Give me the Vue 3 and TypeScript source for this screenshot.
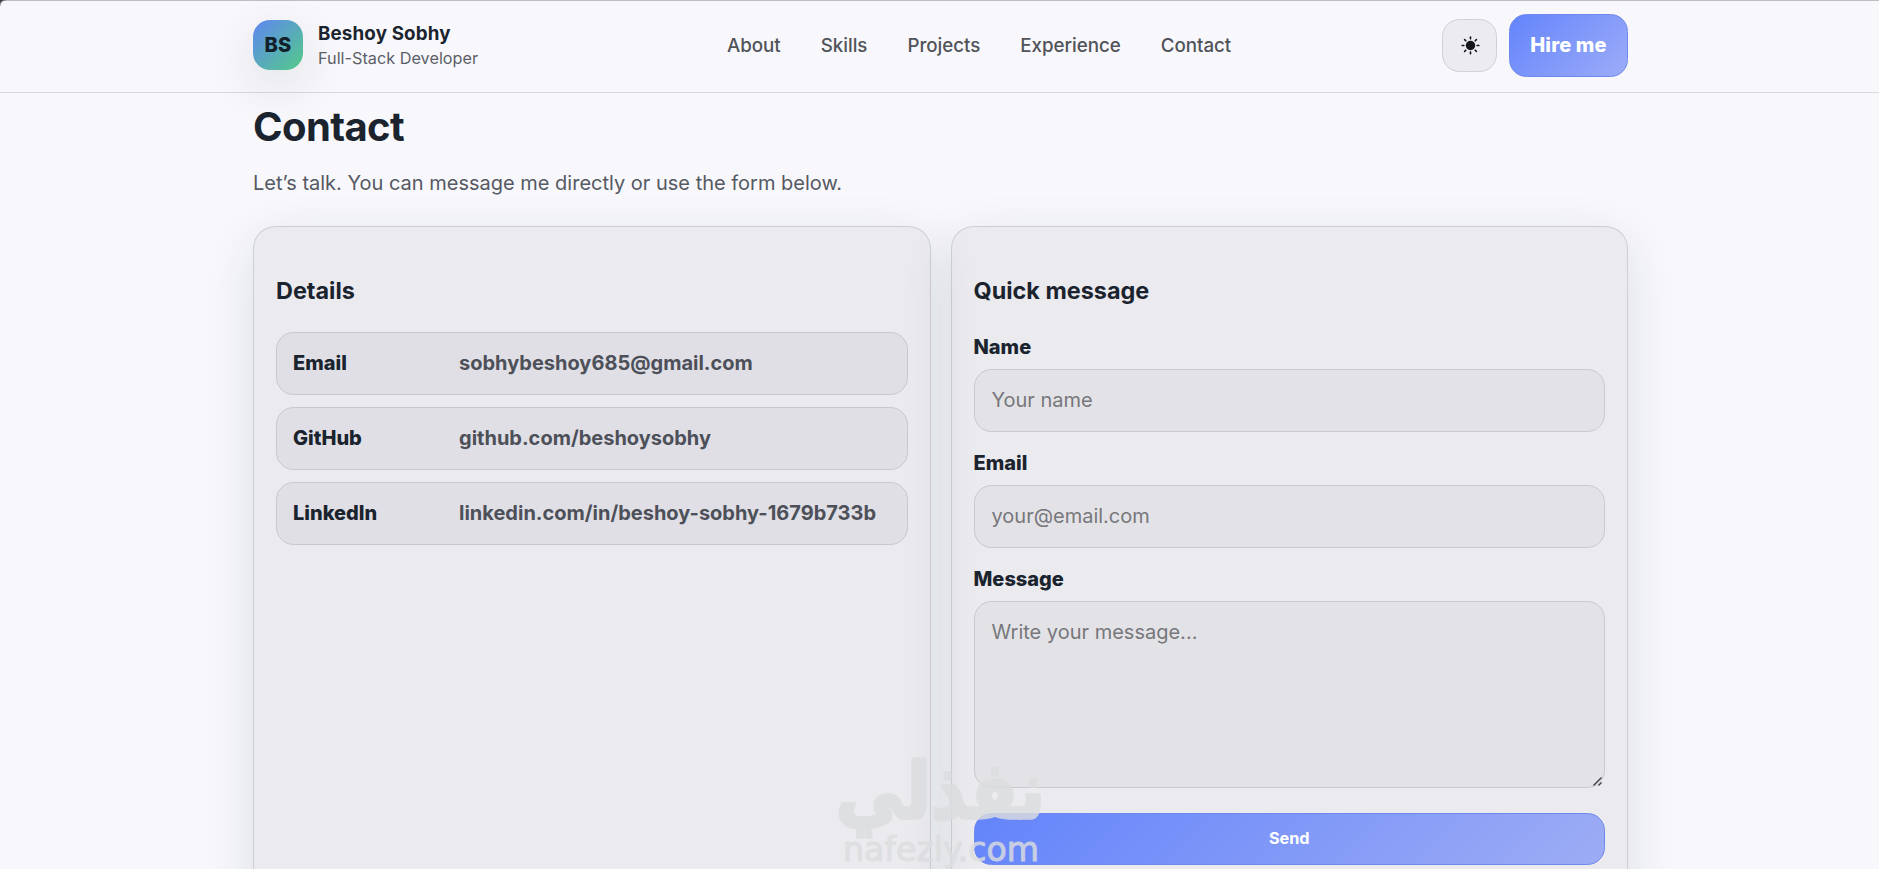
<script setup lang="ts">
import { ref } from 'vue'

interface Detail {
  label: string
  value: string
  href: string
}

const links: string[] = ['About', 'Skills', 'Projects', 'Experience', 'Contact']

const details: Detail[] = [
  { label: 'Email', value: 'sobhybeshoy685@gmail.com', href: 'mailto:sobhybeshoy685@gmail.com' },
  { label: 'GitHub', value: 'github.com/beshoysobhy', href: '#github' },
  { label: 'LinkedIn', value: 'linkedin.com/in/beshoy-sobhy-1679b733b', href: '#linkedin' },
]

const rays: number[] = [0, 45, 90, 135, 180, 225, 270, 315]

const name = ref('')
const email = ref('')
const message = ref('')
</script>

<template>
  <div class="page">
    <header class="header">
      <div class="container bar">
        <div class="brand">
          <div class="logo">BS</div>
          <div class="brand-text">
            <div class="brand-name">Beshoy Sobhy</div>
            <div class="brand-role">Full-Stack Developer</div>
          </div>
        </div>
        <nav class="nav">
          <a v-for="link in links" :key="link" :href="'#' + link.toLowerCase()">{{ link }}</a>
        </nav>
        <div class="actions">
          <button class="theme" type="button" aria-label="Toggle theme">
            <svg width="19" height="19" viewBox="0 0 18 18">
              <circle cx="9" cy="9" r="4.5" fill="#15161c" />
              <line
                v-for="angle in rays"
                :key="angle"
                x1="9"
                y1="1.1"
                x2="9"
                y2="2.7"
                stroke="#15161c"
                stroke-width="1.5"
                stroke-linecap="round"
                :transform="`rotate(${angle} 9 9)`"
              />
            </svg>
          </button>
          <a class="hire" href="#contact">Hire me</a>
        </div>
      </div>
    </header>

    <main class="container">
      <h1>Contact</h1>
      <p class="lead">Let’s talk. You can message me directly or use the form below.</p>
      <div class="cards">
        <section class="card">
          <h3>Details</h3>
          <div class="rows">
            <a v-for="d in details" :key="d.label" class="row" :href="d.href">
              <span class="row-label">{{ d.label }}</span>
              <span class="row-value">{{ d.value }}</span>
            </a>
          </div>
        </section>
        <section class="card">
          <h3>Quick message</h3>
          <form @submit.prevent>
            <label for="name">Name</label>
            <input id="name" v-model="name" placeholder="Your name" />
            <label for="email">Email</label>
            <input id="email" v-model="email" placeholder="your@email.com" />
            <label for="message">Message</label>
            <div class="area">
              <textarea id="message" v-model="message" placeholder="Write your message..."></textarea>
              <svg class="grip" width="12" height="12" viewBox="0 0 12 12">
                <path d="M1.5 9.5 9.5 1.5M6.5 9.5 9.5 6.5" stroke="#3c3d42" stroke-width="1.4" fill="none" />
              </svg>
            </div>
            <button class="send" type="submit">Send</button>
          </form>
        </section>
      </div>
    </main>

    <svg class="watermark" width="230" height="167" viewBox="0 0 230 167">
      <g transform="translate(0 116) scale(1 1.18)">
        <text class="wm-ar" x="5" y="0" textLength="209" lengthAdjust="spacingAndGlyphs" direction="ltr">نفذلي</text>
      </g>
      <text class="wm-en" x="12" y="159" textLength="196" lengthAdjust="spacingAndGlyphs">nafezly.com</text>
    </svg>
    <div class="corner"></div>
  </div>
</template>

<style>
body {
  background: #f8f8fc;
}
</style>

<style scoped>
.page {
  position: relative;
  box-sizing: border-box;
  height: 869px;
  overflow: hidden;
  font-family: Inter, "Liberation Sans", sans-serif;
  font-size: 20px;
  color: #1b242e;
  background: #f8f8fc;
}
.page * {
  box-sizing: border-box;
}
.container {
  width: 1375px;
  margin-left: 253px;
}
a {
  text-decoration: none;
  color: inherit;
}
.header {
  height: 93px;
  border-top: 1px solid #bdbdc2;
  border-bottom: 1px solid #d9dae0;
}
.bar {
  height: 91px;
  display: flex;
  justify-content: space-between;
  align-items: center;
}
.brand {
  display: flex;
  align-items: center;
  gap: 15px;
  height: 50px;
  margin-top: -3px;
  margin-right: 38px;
}
.logo {
  width: 50px;
  height: 50px;
  border-radius: 17px;
  display: flex;
  align-items: center;
  justify-content: center;
  font-weight: 800;
  font-size: 20px;
  letter-spacing: 0.2px;
  color: #12202b;
  background: linear-gradient(135deg, #6086f2, #52cb88);
  box-shadow: 0 16px 50px rgba(20, 24, 36, 0.12);
}
.brand-text {
  padding-top: 2px;
}
.brand-name {
  font-size: 18.75px;
  line-height: 25px;
  font-weight: 700;
  letter-spacing: 0.15px;
}
.brand-role {
  font-size: 16.25px;
  line-height: 25px;
  color: #5c5f68;
}
.nav {
  display: flex;
  gap: 40px;
  margin-top: -2px;
  font-size: 18.75px;
  font-weight: 500;
  letter-spacing: -0.03px;
  color: #505359;
}
.actions {
  display: flex;
  align-items: center;
  gap: 12px;
  margin-top: -2px;
}
.theme {
  width: 55px;
  height: 53px;
  padding: 0 0 0 1px;
  border: 1px solid #d0d0d5;
  border-radius: 17.5px;
  background: #ececf0;
  display: flex;
  align-items: center;
  justify-content: center;
}
.hire {
  width: 119px;
  height: 63px;
  padding-bottom: 2px;
  border: 1px solid #6e88ed;
  border-radius: 17.5px;
  display: flex;
  align-items: center;
  justify-content: center;
  font-weight: 800;
  letter-spacing: 0.15px;
  color: #fff;
  background: linear-gradient(135deg, #6384fb, #9dacf8);
}
h1 {
  margin: 9px 0 0;
  font-size: 40px;
  line-height: 50px;
  font-weight: 700;
  letter-spacing: -0.6px;
}
.lead {
  margin: 16px 0 28px;
  font-size: 20px;
  line-height: 30px;
  color: #555962;
}
.cards {
  display: grid;
  grid-template-columns: 1fr 1fr;
  gap: 20px;
}
.card {
  height: 700px;
  padding: 48px 22px 0;
  border: 1px solid rgba(20, 22, 34, 0.13);
  border-radius: 22.5px;
  background: rgba(20, 20, 26, 0.06);
  box-shadow: 0 14px 50px rgba(20, 40, 44, 0.12);
}
h3 {
  margin: 0 0 42px;
  font-size: 23.4px;
  line-height: 32px;
  font-weight: 700;
}
.card:first-child h3 {
  margin-bottom: 25px;
}
.rows {
  display: grid;
  gap: 12.5px;
}
.row {
  height: 62.5px;
  padding: 0 16px;
  border: 1px solid #c8c8cf;
  border-radius: 17.5px;
  background: #dfdfe5;
  display: grid;
  grid-template-columns: 166px 1fr;
  align-items: center;
}
.row-label {
  font-weight: 800;
}
.row-value {
  font-weight: 700;
  color: #4d5059;
  white-space: nowrap;
}
form {
  display: grid;
  margin-top: -17px;
}
label {
  height: 37px;
  line-height: 24px;
  padding-top: 3px;
  font-weight: 800;
}
input,
textarea {
  display: block;
  width: 100%;
  height: 62.5px;
  margin: 0 0 16.5px;
  padding: 0 17px;
  border: 1px solid #c9c9ce;
  border-radius: 17.5px;
  background: #e3e3e7;
  font: inherit;
  outline: none;
}
input::placeholder,
textarea::placeholder {
  color: #77777b;
  opacity: 1;
}
.area {
  position: relative;
  margin-bottom: 25px;
}
textarea {
  height: 187px;
  margin: 0;
  padding: 15px 17px;
  line-height: 30px;
  resize: none;
}
.grip {
  position: absolute;
  right: 1px;
  bottom: 0;
}
.send {
  height: 52px;
  padding: 0 0 2px;
  border: 1px solid #6e88ed;
  border-radius: 17.5px;
  background: linear-gradient(135deg, #6384fb, #9dacf4);
  font-family: inherit;
  font-size: 16.25px;
  font-weight: 700;
  color: #fff;
}
.watermark {
  position: absolute;
  left: 831px;
  top: 702px;
  fill: #dcdddf;
  stroke: #dcdddf;
  stroke-linejoin: round;
  opacity: 0.82;
}
.wm-ar {
  font-family: "DejaVu Sans", sans-serif;
  font-size: 66px;
  font-weight: 700;
  stroke-width: 3px;
}
.wm-en {
  font-family: "DejaVu Sans", sans-serif;
  font-size: 33px;
  stroke-width: 1px;
}
.corner {
  position: absolute;
  left: 0;
  top: 0;
  width: 6px;
  height: 6px;
  background: radial-gradient(circle at 100% 100%, transparent 5px, #3a3a3e 7px);
}
</style>
